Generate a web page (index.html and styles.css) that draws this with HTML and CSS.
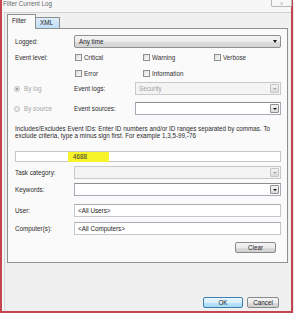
FILE: index.html
```html
<!DOCTYPE html>
<html lang="en">
<head>
    <meta charset="UTF-8">
    <title>Filter Current Log</title>
    <link rel="stylesheet" href="styles.css">
</head>
<body>
    <div class="frame">
        <div class="titlebar">
            <span class="title">Filter Current Log</span>
            <span class="close">x</span>
        </div>
        <div class="client">
            <div class="tabs">
                <span class="tab active">Filter</span>
                <span class="tab xml">XML</span>
            </div>
            <div class="panel">
                <div class="row r-logged">
                    <span class="lbl">Logged:</span>
                    <div class="field select">Any time<span class="arrow"></span></div>
                </div>
                <div class="row r-level1">
                    <span class="lbl">Event level:</span>
                    <div class="checks">
                        <span class="check"><i class="box"></i>Critical</span>
                        <span class="check"><i class="box"></i>Warning</span>
                        <span class="check"><i class="box"></i>Verbose</span>
                    </div>
                </div>
                <div class="row r-level2">
                    <span class="lbl"></span>
                    <div class="checks">
                        <span class="check"><i class="box"></i>Error</span>
                        <span class="check"><i class="box"></i>Information</span>
                    </div>
                </div>
                <div class="row r-bylog">
                    <span class="lbl radio-lbl"><i class="radio on"></i>By log</span>
                    <span class="sublbl">Event logs:</span>
                    <div class="field disabled">Security<span class="arrow-box dim"></span></div>
                </div>
                <div class="row r-bysource">
                    <span class="lbl radio-lbl"><i class="radio"></i>By source</span>
                    <span class="sublbl">Event sources:</span>
                    <div class="field"><span class="arrow-box"></span></div>
                </div>
                <p class="desc">Includes/Excludes Event IDs: Enter ID numbers and/or ID ranges separated by commas. To exclude criteria, type a minus sign first. For example 1,3,5-99,-76</p>
                <div class="row r-ids">
                    <div class="field ids"><span class="mark">4688</span></div>
                </div>
                <div class="row r-task">
                    <span class="lbl">Task category:</span>
                    <div class="field disabled"><span class="arrow-box dim"></span></div>
                </div>
                <div class="row r-keywords">
                    <span class="lbl">Keywords:</span>
                    <div class="field"><span class="arrow-box"></span></div>
                </div>
                <div class="row r-user">
                    <span class="lbl">User:</span>
                    <div class="field text">&lt;All Users&gt;</div>
                </div>
                <div class="row r-computers">
                    <span class="lbl">Computer(s):</span>
                    <div class="field text">&lt;All Computers&gt;</div>
                </div>
                <div class="row r-clear">
                    <button class="btn clear">Clear</button>
                </div>
            </div>
            <div class="buttons">
                <button class="btn ok">OK</button>
                <button class="btn cancel">Cancel</button>
            </div>
        </div>
    </div>
</body>
</html>
```

FILE: styles.css
```css
body {
    margin: 0;
    background-color: #fff;
    font-family: "Liberation Sans", Arial, sans-serif;
    font-size: 6.3px;
    color: #333;
}

.frame {
    width: 289px;
    height: 311px;
    border: 2px solid #c4454f;
    border-top: none;
    box-shadow: 0 2px 1px #7a7a7a;
    display: flex;
    flex-direction: column;
    background-color: #f7f7f7;
}

.titlebar {
    height: 12px;
    display: flex;
    justify-content: space-between;
    align-items: flex-start;
    padding-left: 1px;
}

.title {
    color: #6a6a6a;
    line-height: 8px;
}

.close {
    width: 19px;
    height: 6px;
    margin-right: -1px;
    border: 1px solid #b5b5b5;
    border-top: none;
    border-radius: 0 0 2px 2px;
    color: #999;
    font-size: 5px;
    line-height: 6px;
    text-align: center;
}

.client {
    flex: 1;
    background-color: #f0f0f0;
    border-top: 1px solid #d0d0d0;
    border-left: 1px solid #d4d4d4;
    margin-left: 2px;
    padding-top: 1px;
}

.tabs {
    display: flex;
    align-items: flex-end;
    height: 14px;
    padding-left: 2px;
}

.tab {
    border: 1px solid #8e8f8f;
    border-bottom: none;
    padding-left: 4px;
    color: #222;
}

.tab.active {
    width: 23px;
    height: 14px;
    line-height: 11px;
    background-color: #fafafa;
    position: relative;
    z-index: 1;
    margin-bottom: -1px;
}

.tab.xml {
    width: 19px;
    height: 10px;
    line-height: 10px;
    border-left: none;
    background: linear-gradient(#dcecfc, #c2def5);
}

.panel {
    width: 266px;
    height: 233px;
    margin-left: 2px;
    border: 1px solid #8e8f8f;
    background-color: #fafafa;
    padding: 0 6px 0 7px;
}

.row {
    display: flex;
    align-items: center;
    height: 13px;
}

.lbl {
    width: 59px;
    flex-shrink: 0;
    color: #2a2a2a;
}

.sublbl {
    width: 61px;
    flex-shrink: 0;
    color: #2a2a2a;
}

.r-logged { margin-top: 6px; }
.r-level1 { margin-top: 5px; height: 9px; }
.r-level2 { margin-top: 7px; height: 9px; }
.r-bylog { margin-top: 4px; }
.r-bysource { margin-top: 7px; }
.r-ids { margin-top: 12px; height: 11px; }
.r-task { margin-top: 4px; }
.r-keywords { margin-top: 4px; }
.r-user { margin-top: 8px; }
.r-computers { margin-top: 5px; }
.r-clear { margin-top: 7px; height: 10px; justify-content: flex-end; padding-right: 5px; }

.field {
    flex: 1;
    height: 13px;
    box-sizing: border-box;
    border: 1px solid #a5acb5;
    border-top-color: #8b8f95;
    background-color: #fff;
    display: flex;
    align-items: center;
    padding-left: 3px;
    color: #222;
}

.field.select {
    border-color: #8e8f8f;
    border-radius: 2px;
    background: linear-gradient(#f4f4f4 0%, #ececec 50%, #dcdcdc 51%, #d4d4d4 100%);
    padding-left: 4px;
}

.arrow {
    margin-left: auto;
    margin-right: 3px;
    border-left: 2px solid transparent;
    border-right: 2px solid transparent;
    border-top: 3px solid #111;
}

.arrow-box {
    margin-left: auto;
    margin-right: 1px;
    width: 7px;
    height: 7px;
    border: 1px solid #8e8f8f;
    border-radius: 1px;
    background: linear-gradient(#f4f4f4, #dadada);
    display: flex;
    align-items: center;
    justify-content: center;
}

.arrow-box::after {
    content: "";
    border-left: 2px solid transparent;
    border-right: 2px solid transparent;
    border-top: 2px solid #111;
}

.arrow-box.dim {
    border-color: #c6c6c6;
}

.arrow-box.dim::after {
    border-top-color: #a8a8a8;
}

.field.disabled {
    background-color: #f4f4f4;
    border-color: #c9c9c9;
    color: #a0a0a0;
}

.field.text {
    border-color: #c4c8cc;
    border-top-color: #abadb3;
}

.field.ids {
    height: 11px;
    padding-left: 53px;
    border-color: #c4c8cc;
}

.mark {
    background-color: #f7f42a;
    box-shadow: 0 0 0 1px #f7f42a;
    width: 35px;
    height: 8px;
    padding-left: 4px;
    line-height: 8px;
    color: #333;
}

.checks {
    display: grid;
    grid-template-columns: 68px 71px 1fr;
    padding-left: 1px;
    flex: 1;
}

.check {
    display: flex;
    align-items: center;
}

.box {
    width: 7px;
    height: 7px;
    box-sizing: border-box;
    border: 1px solid #8f8f8f;
    background: linear-gradient(135deg, #dcdcdc, #fbfbfb);
    margin-right: 2px;
}

.radio-lbl {
    display: flex;
    align-items: center;
    color: #a6a6a6;
    margin-left: -1px;
    width: 60px;
}

.radio {
    width: 6px;
    height: 6px;
    box-sizing: border-box;
    border: 1px solid #c0c0c0;
    border-radius: 50%;
    background-color: #eee;
    margin-right: 4px;
}

.radio.on {
    background: radial-gradient(circle, #a0a0a0 40%, #e8e8e8 45%);
}

.desc {
    margin: 10px 0 0 0;
    line-height: 7px;
    color: #2a2a2a;
    width: 266px;
}

.btn {
    font-family: "Liberation Sans", Arial, sans-serif;
    font-size: 6.3px;
    color: #222;
    height: 11px;
    padding: 0;
    border: 1px solid #8a8a8a;
    border-radius: 2px;
    background: linear-gradient(#f4f4f4 0%, #ebebeb 50%, #dddddd 51%, #cfcfcf 100%);
}

.btn.clear {
    width: 41px;
}

.buttons {
    display: flex;
    justify-content: flex-end;
    gap: 4px;
    margin-top: 34px;
    padding-right: 12px;
}

.btn.ok {
    width: 40px;
    border-color: #3c7fb1;
    background: linear-gradient(#eaf6fd 0%, #d9f0fc 50%, #bee6fd 51%, #a7d9f5 100%);
}

.btn.cancel {
    width: 32px;
}
```
